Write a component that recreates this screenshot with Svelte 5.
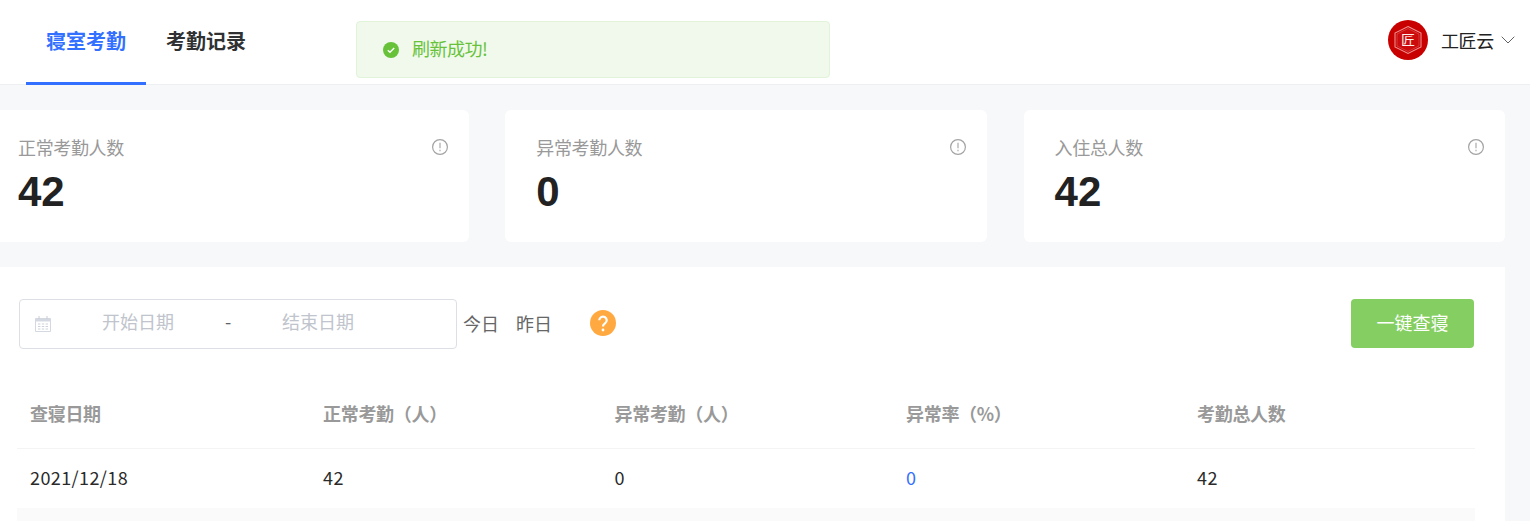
<script>
  const stats = [
    { label: '正常考勤人数', value: '42' },
    { label: '异常考勤人数', value: '0' },
    { label: '入住总人数', value: '42' }
  ];
  const columns = ['查寝日期', '正常考勤（人）', '异常考勤（人）', '异常率（%）', '考勤总人数'];
  const row = ['2021/12/18', '42', '0', '0', '42'];
</script>

<div class="page">
  <header class="header">
    <nav class="tabs">
      <div class="tab active">寝室考勤</div>
      <div class="tab">考勤记录</div>
    </nav>
    <div class="user">
      <svg class="logo" viewBox="0 0 40 40" width="40" height="40" aria-hidden="true">
        <circle cx="20" cy="20" r="20" fill="#c80000" />
        <path d="M20 6.5 33 13v14l-13 6.5L7 27V13z" fill="none" stroke="#ee9090" stroke-width="1.1" />
        <path d="M20 8.5 31 14v12l-11 5.5L9 26V14z" fill="#cc0c0c" stroke="#dc5050" stroke-width="0.7" />
        <text x="20" y="25" text-anchor="middle" font-size="14" fill="#fff0f0" font-family="Noto Sans CJK SC">匠</text>
      </svg>
      <span class="name">工匠云</span>
      <svg class="chev" viewBox="0 0 14 8" width="14" height="8" aria-hidden="true">
        <path d="M.7.7 7 7l6.3-6.3" fill="none" stroke="#606266" stroke-width="1" />
      </svg>
    </div>
    <div class="toast">
      <svg viewBox="0 0 16 16" width="16" height="16" aria-hidden="true">
        <circle cx="8" cy="8" r="8" fill="#67c23a" />
        <path d="M4.8 8.2l2.2 2.1 4.2-4.2" fill="none" stroke="#fff" stroke-width="1.4" />
      </svg>
      <span class="toast-text">刷新成功!</span>
    </div>
  </header>

  <main class="main">
    <section class="stats">
      {#each stats as s}
        <div class="card">
          <div class="top">
            <span class="label">{s.label}</span>
            <svg viewBox="0 0 16 16" width="16" height="16" aria-hidden="true">
              <circle cx="8" cy="8" r="7.4" fill="none" stroke="#a3a3a3" stroke-width="1.2" />
              <path d="M8 3.8v5.4M8 10.8v1.4" stroke="#a3a3a3" stroke-width="1.1" fill="none" />
            </svg>
          </div>
          <div class="value">{s.value}</div>
        </div>
      {/each}
    </section>

    <section class="panel">
      <div class="filters">
        <div class="range">
          <svg class="cal" viewBox="0 0 16 16" width="16" height="16" aria-hidden="true">
            <path d="M.5 2.5h15v13H.5z" fill="none" stroke="#d4d8e0" />
            <path d="M.5 2.5h15v3H.5z" fill="#d4d8e0" />
            <path d="M4 0v3M12 0v3" stroke="#c8ccd4" />
            <path d="M3 8h2.4M6.8 8h2.4M10.6 8h2.4M3 10.5h2.4M6.8 10.5h2.4M10.6 10.5h2.4M3 13h2.4M6.8 13h2.4M10.6 13h2.4" stroke="#cdd1d9" />
          </svg>
          <span class="ph">开始日期</span>
          <span class="sep">-</span>
          <span class="ph">结束日期</span>
        </div>
        <span class="quick first">今日</span>
        <span class="quick second">昨日</span>
        <svg class="help" viewBox="0 0 26 26" width="26" height="26" aria-hidden="true">
          <circle cx="13" cy="13" r="13" fill="#ffa940" />
          <path d="M9.3 10.3a3.7 3.7 0 1 1 5.7 3.1c-1.3.8-2 1.4-2 3.1" fill="none" stroke="#fff" stroke-width="2.2" />
          <circle cx="13" cy="20" r="1.4" fill="#fff" />
        </svg>
        <button class="btn">一键查寝</button>
      </div>

      <div class="table">
        <div class="tr head">
          {#each columns as c}<div class="td">{c}</div>{/each}
        </div>
        <div class="tr body">
          {#each row as c, i}<div class="td" class:link={i === 3}>{c}</div>{/each}
        </div>
        <div class="stripe"></div>
      </div>
    </section>
  </main>
</div>

<style>
  :global(body) {
    margin: 0;
    background: #f7f8fa;
    overflow: hidden;
  }
  .page {
    width: 1530px;
    height: 521px;
    overflow: hidden;
    font-family: "Noto Sans CJK SC", "Noto Sans", sans-serif;
    font-size: 18px;
    color: #2a2a2a;
    background: #f7f8fa;
  }
  .header {
    position: relative;
    height: 84px;
    display: flex;
    justify-content: space-between;
    background: #fff;
    border-bottom: 1px solid #eeeff1;
    padding-left: 26px;
    padding-right: 15px;
  }
  .tabs {
    display: flex;
    height: 85px;
  }
  .tab {
    width: 120px;
    height: 82px;
    line-height: 82px;
    text-align: center;
    font-size: 20px;
    font-weight: 700;
    color: #303133;
  }
  .tab.active {
    color: #3370ff;
    border-bottom: 3px solid #3370ff;
  }
  .user {
    display: flex;
    align-items: center;
    height: 80px;
  }
  .name {
    margin-left: 13px;
    color: #222;
    letter-spacing: -0.3px;
  }
  .chev {
    margin-left: 7px;
  }
  .toast {
    position: absolute;
    left: 356px;
    top: 21px;
    width: 474px;
    height: 57px;
    box-sizing: border-box;
    display: flex;
    align-items: center;
    gap: 13px;
    padding-left: 26px;
    background: #f0f9eb;
    border: 1px solid #e1f3d8;
    border-radius: 4px;
    color: #67c23a;
  }
  .toast-text {
    letter-spacing: -0.5px;
    line-height: 24px;
    margin-top: -4px;
  }
  .main {
    width: 1518px;
    margin-left: -13px;
  }
  .stats {
    display: grid;
    grid-template-columns: 482px 482px 481.5px;
    column-gap: 36.3px;
    padding-top: 25px;
  }
  .card {
    height: 132px;
    box-sizing: border-box;
    padding: 22px 21px 0 31px;
    background: #fff;
    border-radius: 6px;
  }
  .top {
    display: flex;
    justify-content: space-between;
    align-items: center;
    height: 30px;
    color: #999;
  }
  .label {
    letter-spacing: -0.35px;
  }
  .value {
    margin-top: 4px;
    font-family: "Liberation Sans", sans-serif;
    font-size: 42px;
    font-weight: 700;
    line-height: 52px;
    color: #222;
  }
  .panel {
    margin-top: 25px;
    height: 254px;
    box-sizing: border-box;
    padding: 32px 30px 0;
    background: #fff;
  }
  .filters {
    display: flex;
    align-items: center;
    height: 50px;
    padding-left: 2px;
  }
  .range {
    width: 438px;
    height: 50px;
    box-sizing: border-box;
    display: flex;
    align-items: center;
    padding-left: 15px;
    padding-bottom: 6px;
    border: 1px solid #dcdfe6;
    border-radius: 4px;
  }
  .cal {
    margin-right: 7px;
    margin-top: 6px;
  }
  .ph {
    width: 160px;
    text-align: center;
    color: #c0c4cc;
  }
  .sep {
    width: 20px;
    text-align: center;
    color: #606266;
  }
  .quick {
    color: #666;
    margin-top: -3px;
  }
  .first {
    margin-left: 6px;
  }
  .second {
    margin-left: 17px;
  }
  .help {
    margin-left: 38px;
    margin-bottom: 2px;
  }
  .btn {
    margin-left: auto;
    margin-right: 1px;
    margin-bottom: 1px;
    width: 123px;
    height: 49px;
    padding: 0 0 4px;
    border: 0;
    border-radius: 4px;
    background: #85ce61;
    color: #fff;
    font: inherit;
  }
  .table {
    margin-top: 35px;
  }
  .tr {
    display: grid;
    grid-template-columns: 293px 291.5px 291.5px 291px 1fr;
  }
  .td {
    padding-left: 13px;
  }
  .head {
    height: 64px;
    line-height: 58px;
    font-weight: 700;
    color: #999;
    letter-spacing: -0.3px;
    border-bottom: 1px solid #f3f4f5;
  }
  .body {
    height: 59px;
    line-height: 56px;
    letter-spacing: 0.4px;
  }
  .link {
    color: #3370ff;
  }
  .stripe {
    height: 20px;
    background: #fafafa;
  }
</style>
